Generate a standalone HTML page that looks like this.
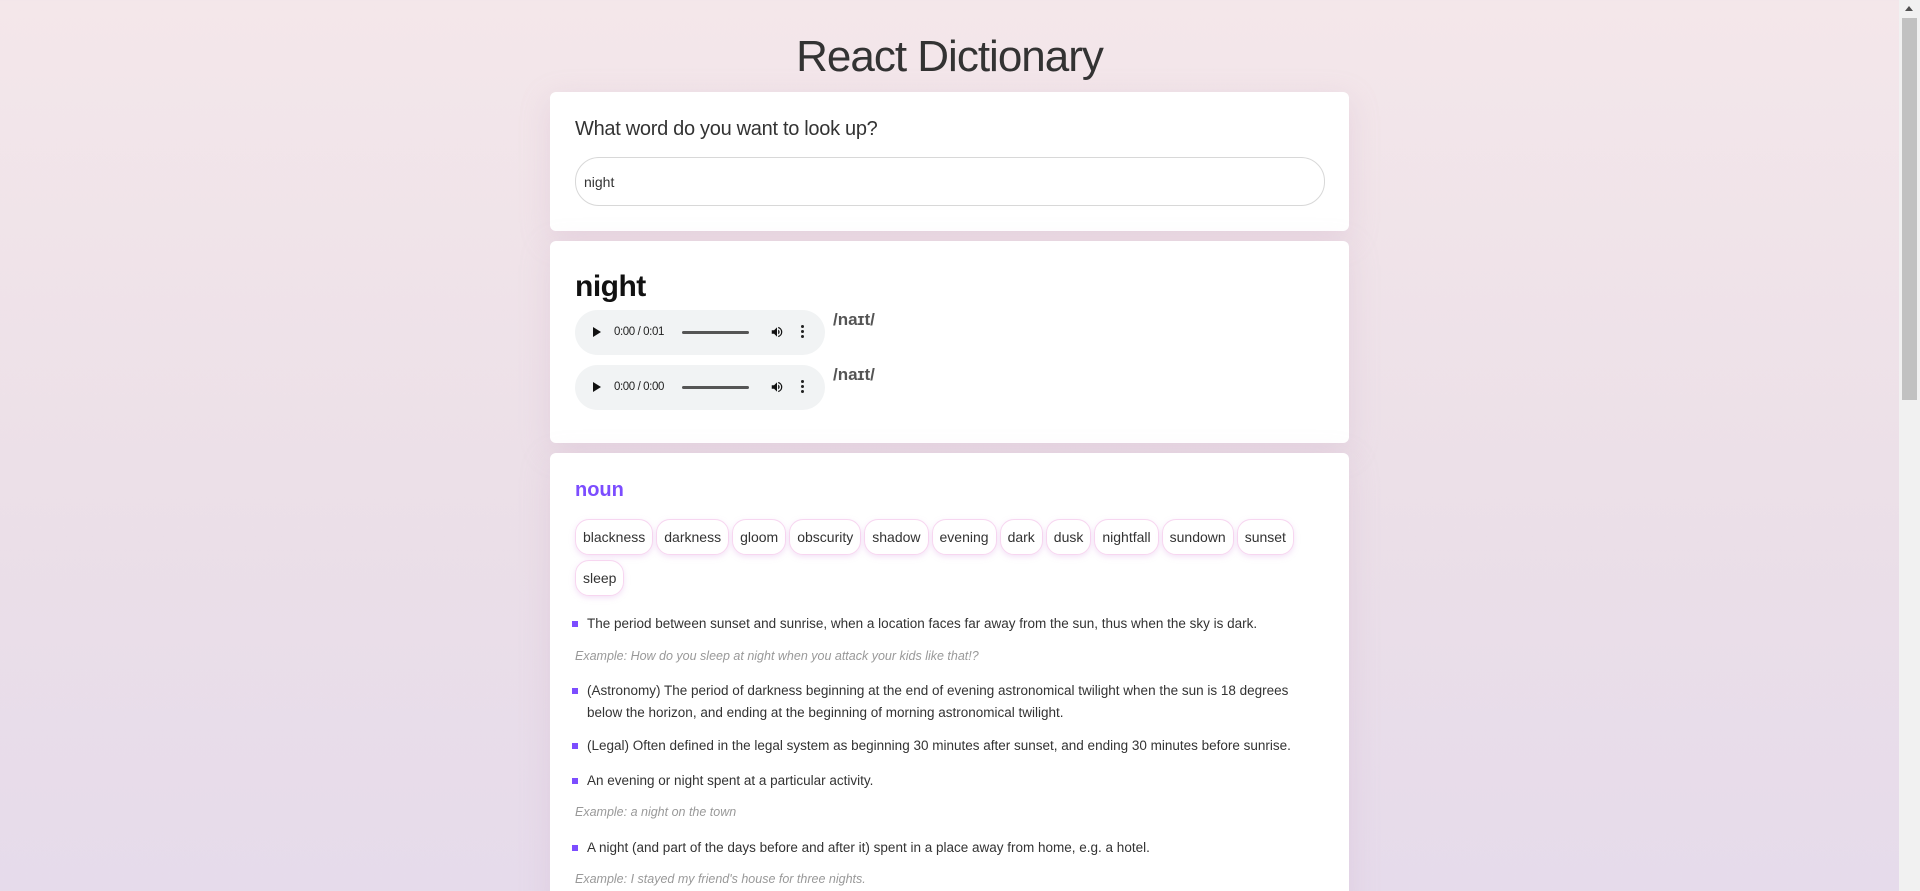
<!DOCTYPE html>
<html><head><meta charset="utf-8"><style>
html,body{margin:0;padding:0;height:891px;overflow:hidden}
body{background:linear-gradient(180deg,#f4e7ea 0%,#ebdfe8 60%,#e6dbeb 100%);font-family:"Liberation Sans",sans-serif;color:#333;position:relative;width:1920px}
.wrap{position:absolute;left:0;top:0;width:1899px}
h1{margin:0;position:absolute;top:32px;width:1899px;text-align:center;font-size:44px;font-weight:normal;color:#333;letter-spacing:-1px}
.card{position:absolute;left:550px;width:799px;background:#fff;border-radius:6px;box-shadow:0 8px 30px rgba(200,160,190,.25)}
.c1{top:92px;height:139px}
.c2{top:241px;height:202px}
.c3{top:453px;height:460px}
.q{position:absolute;left:25px;top:26px;font-size:20px;color:#333;letter-spacing:-.3px}
.inp{position:absolute;left:25px;top:65px;width:750px;height:49px;border:1px solid #d8d8d8;border-radius:24px;font-size:14px;line-height:49px;box-sizing:border-box;padding-left:8px;color:#333}
.w{position:absolute;left:25px;top:29px;font-size:30px;font-weight:bold;color:#111;letter-spacing:-.5px}
.au{position:absolute;left:25px;width:250px;height:45px;background:#f1f3f4;border-radius:23px;font-size:11.5px;color:#222}
.au .pl{position:absolute;left:18px;top:17px;width:0;height:0;border-left:8px solid #111;border-top:5.5px solid transparent;border-bottom:5.5px solid transparent}
.au .t{position:absolute;left:39px;top:16px;letter-spacing:-.4px}
.au .bar{position:absolute;left:107px;top:21px;width:67px;height:3px;background:#555;border-radius:2px}
.au .vol{position:absolute;left:195px;top:15px}
.au .dots{position:absolute;left:226px;top:15px;width:3px}
.au .dots i{display:block;width:3px;height:3px;background:#222;border-radius:50%;margin-bottom:2px}
.ph{position:absolute;left:283px;font-size:17px;font-weight:bold;color:#555}
.pos{position:absolute;left:25px;top:26px;font-size:20px;color:#7c4dff;font-weight:bold}
.chips{position:absolute;left:25px;top:66px;width:760px}
.chip{display:inline-block;height:34px;line-height:34px;padding:0 7px;border:1px solid #f7d6f0;border-radius:14px;font-size:14px;color:#333;margin:0 3px 5px 0;box-shadow:0 2px 6px rgba(220,170,230,.35);vertical-align:top}
.d{position:absolute;left:37px;width:738px;font-size:13.5px;line-height:22px;color:#333}
.d:before{content:"";position:absolute;left:-15px;top:8px;width:6px;height:6px;background:#7c4dff}
.ex{position:absolute;left:25px;font-size:12.5px;font-style:italic;color:#999}
.sb{position:absolute;right:0;top:0;width:21px;height:891px;background:#f1f1f1}
.sb .th{position:absolute;left:3px;top:18px;width:15px;height:382px;background:#c1c1c1}
.sb .up{position:absolute;left:6px;top:6px;border-left:4.5px solid transparent;border-right:4.5px solid transparent;border-bottom:5px solid #505050}
</style></head><body>
<div class="wrap">
<h1>React Dictionary</h1>
<div class="card c1"><div class="q">What word do you want to look up?</div><div class="inp">night</div></div>
<div class="card c2">
<div class="w">night</div>
<div class="au" style="top:69px"><span class="pl"></span><span class="t">0:00 / 0:01</span><span class="bar"></span><span class="vol"><svg width="14" height="14" viewBox="0 0 24 24"><path d="M3 9v6h4l5 5V4L7 9H3zm13.5 3A4.5 4.5 0 0 0 14 8v8a4.5 4.5 0 0 0 2.5-4zM14 3.2v2.1a7 7 0 0 1 0 13.4v2.1a9 9 0 0 0 0-17.6z" fill="#111"/></svg></span><span class="dots"><i></i><i></i><i></i></span></div>
<div class="ph" style="top:69px">/naɪt/</div>
<div class="au" style="top:124px"><span class="pl"></span><span class="t">0:00 / 0:00</span><span class="bar"></span><span class="vol"><svg width="14" height="14" viewBox="0 0 24 24"><path d="M3 9v6h4l5 5V4L7 9H3zm13.5 3A4.5 4.5 0 0 0 14 8v8a4.5 4.5 0 0 0 2.5-4zM14 3.2v2.1a7 7 0 0 1 0 13.4v2.1a9 9 0 0 0 0-17.6z" fill="#111"/></svg></span><span class="dots"><i></i><i></i><i></i></span></div>
<div class="ph" style="top:124px">/naɪt/</div>
</div>
<div class="card c3">
<div class="pos">noun</div>
<div class="chips"><span class="chip">blackness</span><span class="chip">darkness</span><span class="chip">gloom</span><span class="chip">obscurity</span><span class="chip">shadow</span><span class="chip">evening</span><span class="chip">dark</span><span class="chip">dusk</span><span class="chip">nightfall</span><span class="chip">sundown</span><span class="chip">sunset</span><br><span class="chip">sleep</span></div>
<div class="d" style="top:160px">The period between sunset and sunrise, when a location faces far away from the sun, thus when the sky is dark.</div>
<div class="ex" style="top:196px">Example: How do you sleep at night when you attack your kids like that!?</div>
<div class="d" style="top:227px">(Astronomy) The period of darkness beginning at the end of evening astronomical twilight when the sun is 18 degrees below the horizon, and ending at the beginning of morning astronomical twilight.</div>
<div class="d" style="top:282px">(Legal) Often defined in the legal system as beginning 30 minutes after sunset, and ending 30 minutes before sunrise.</div>
<div class="d" style="top:317px">An evening or night spent at a particular activity.</div>
<div class="ex" style="top:352px">Example: a night on the town</div>
<div class="d" style="top:384px">A night (and part of the days before and after it) spent in a place away from home, e.g. a hotel.</div>
<div class="ex" style="top:419px">Example: I stayed my friend's house for three nights.</div>
</div>
</div>
<div class="sb"><div class="up"></div><div class="th"></div></div>
</body></html>
